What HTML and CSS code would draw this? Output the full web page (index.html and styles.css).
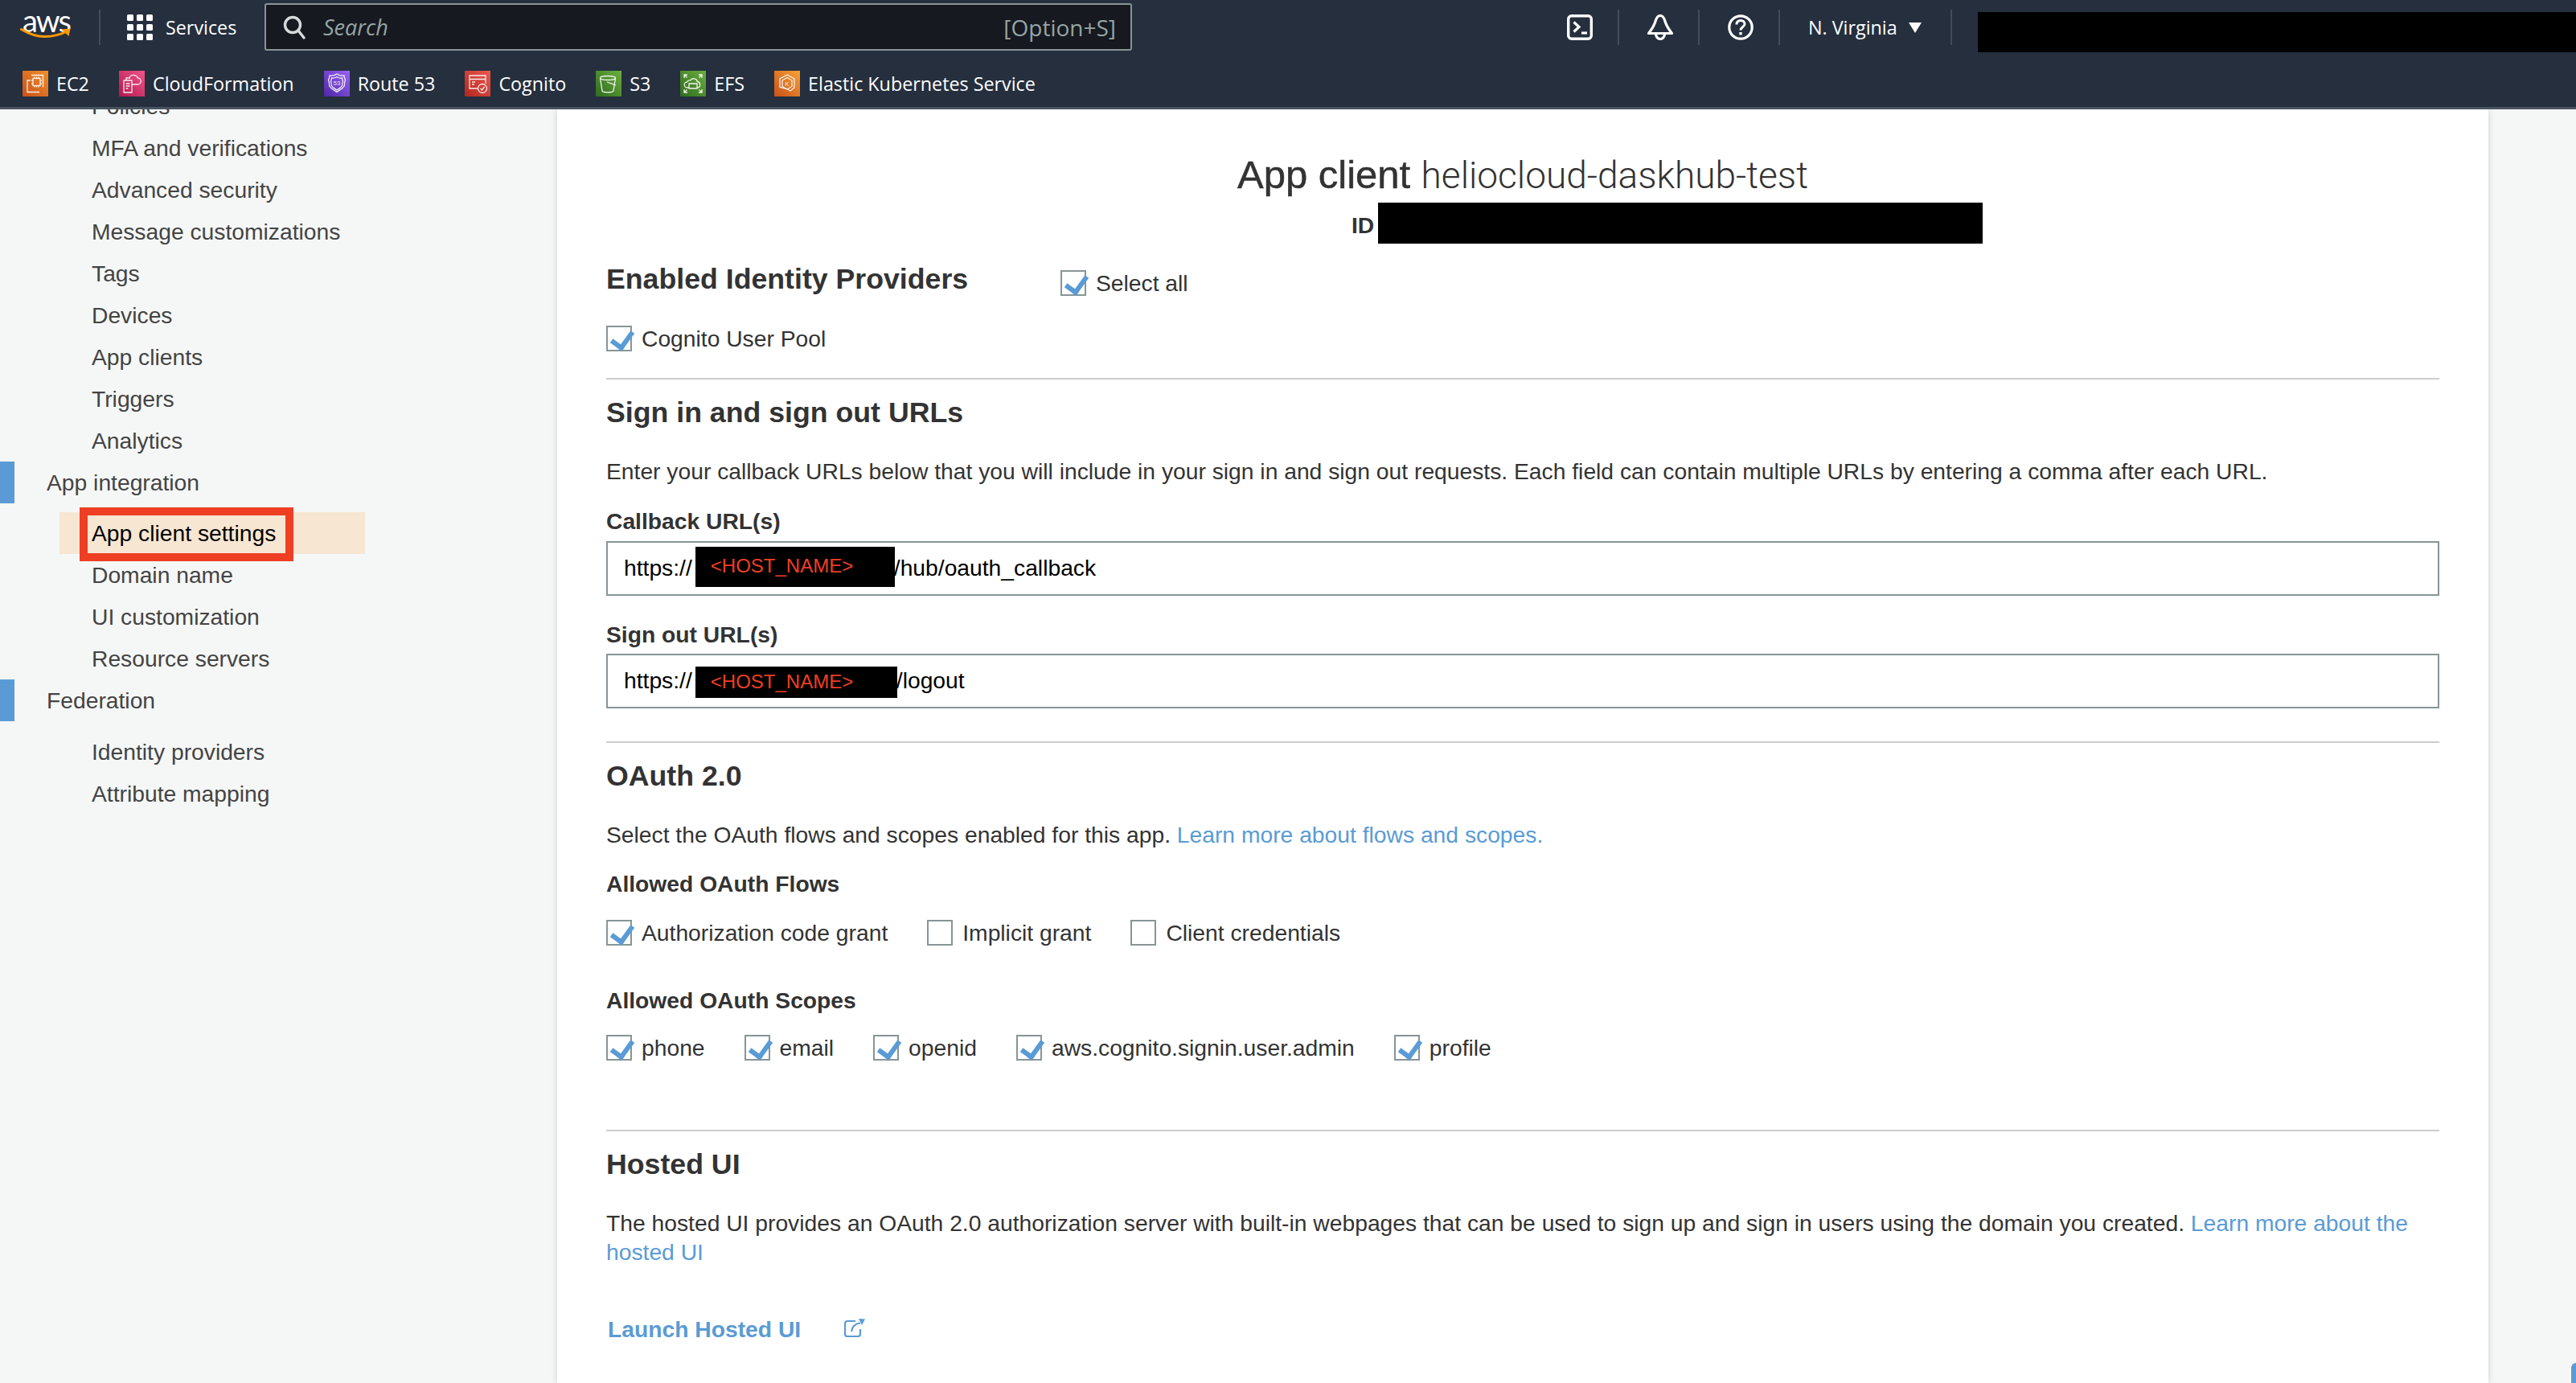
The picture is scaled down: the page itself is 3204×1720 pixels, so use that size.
FILE: index.html
```html
<!DOCTYPE html>
<html lang="en">
<head>
<meta charset="utf-8">
<title>App client settings</title>
<link rel="stylesheet" href="styles.css">
</head>
<body>
<header class="topbar">
  <div class="bar-main">
    <div class="logo">
      <span class="logo-text">aws</span>
      <svg class="swoosh" viewBox="0 0 64 14"><path d="M1 1.5C12 8 20 10.500 30 10.500C40 10.500 50 8 59 3.500" fill="none" stroke="#f90" stroke-width="3" stroke-linecap="round"/><path d="M51 1.500L62 .5L60 10Z" fill="#f90"/></svg>
    </div>
    <div class="bar-divider"></div>
    <div class="services">
      <svg class="grid-icon" viewBox="0 0 32 32" fill="#fff"><rect width="8" height="8" rx="1.500"/><rect x="12" width="8" height="8" rx="1.500"/><rect x="24" width="8" height="8" rx="1.500"/><rect y="12" width="8" height="8" rx="1.500"/><rect x="12" y="12" width="8" height="8" rx="1.500"/><rect x="24" y="12" width="8" height="8" rx="1.500"/><rect y="24" width="8" height="8" rx="1.500"/><rect x="12" y="24" width="8" height="8" rx="1.500"/><rect x="24" y="24" width="8" height="8" rx="1.500"/></svg>
      <span>Services</span>
    </div>
    <div class="search">
      <svg class="search-icon" viewBox="0 0 28 30" fill="none" stroke="#d5dbdb" stroke-width="3.400"><circle cx="12" cy="12" r="9.500"/><path d="M19 19L26 28" stroke-linecap="round"/></svg>
      <span class="search-text">Search</span>
      <span class="search-key">[Option+S]</span>
    </div>
    <div class="tool tool-first">
      <svg class="tool-icon" viewBox="0 0 32 32" fill="none" stroke="#fff" stroke-width="3.400"><rect x="1.700" y="1.700" width="28.600" height="28.600" rx="4"/><path d="M8.500 9.500L15 15.500L8.500 21.500" stroke-width="3.200"/><path d="M18 23H25" stroke-width="3.200"/></svg>
    </div>
    <div class="tool">
      <svg class="tool-icon" viewBox="0 0 32 32" fill="none" stroke="#fff" stroke-width="3.200" stroke-linejoin="round"><path d="M16 1.500C19.500 1.500 21 5 22 8.500C23.500 14 27 19 30.500 23.500H1.500C5 19 8.500 14 10 8.500C11 5 12.500 1.500 16 1.500Z"/><path d="M10.500 24A5.500 6.500 0 0 0 21.500 24"/></svg>
    </div>
    <div class="tool">
      <svg class="tool-icon" viewBox="0 0 32 32" fill="none" stroke="#fff" stroke-width="3.200"><circle cx="16" cy="16" r="14.200"/><path d="M11 12.500C11 9 13 7.500 16 7.500C19 7.500 21 9.200 21 11.800C21 15.500 16 15.500 16 19.500" stroke-width="3"/><rect x="14.300" y="22" width="3.400" height="3.400" fill="#fff" stroke="none"/></svg>
    </div>
    <div class="region"><span>N. Virginia</span><span class="caret"></span></div>
    <div class="account-redact"></div>
  </div>
  <nav class="shortcuts">
    <a class="shortcut"><span class="svc svc-orange"><svg viewBox="0 0 32 32" fill="none" stroke="#fff" stroke-width="1.300" opacity=".9"><rect x="13" y="9.500" width="9" height="9"/><path d="M15 7.500v2M17.500 7.500v2M20 7.500v2M15 18.500v2M17.500 18.500v2M20 18.500v2M11 12h2M11 16h2M22 12h2M22 16h2"/><path d="M11 5.500h14.500v15M21 26.500H6V12h4"/></svg></span>EC2</a>
    <a class="shortcut"><span class="svc svc-pink"><svg viewBox="0 0 32 32" fill="none" stroke="#fff" stroke-width="1.300" opacity=".9"><path d="M6 12h10v15H6zM8.500 16h5M8.500 19h5M8.500 22h3"/><path d="M9 12V9h5M16 17h7a4 4 0 0 0 .5-8a6 6 0 0 0-10.500-1"/></svg></span>CloudFormation</a>
    <a class="shortcut"><span class="svc svc-purple"><svg viewBox="0 0 32 32" fill="none" stroke="#fff" stroke-width="1.300" opacity=".9"><path d="M16 4c3 2 6 2.500 9 2c0 3 1 4 1.500 5.500c-1 3-1.500 4-1 7c-2 4-6 5-9.500 8c-3.500-3-7.500-4-9.500-8c.5-3 0-4-1-7C6 10 7 9 7 6c3 .5 6 0 9-2z"/><path d="M16 7.500c2 1.500 4 2 6.500 1.500c0 2 .5 3 1 4c-.5 2-1 3-.5 5c-1.500 3-4.500 4-7 6c-2.500-2-5.500-3-7-6c.5-2 0-3-.5-5c.5-1 1-2 1-4c2.500.5 4.500 0 6.500-1.500z"/><text class="svc-label" x="16" y="18" text-anchor="middle">53</text></svg></span>Route 53</a>
    <a class="shortcut"><span class="svc svc-red"><svg viewBox="0 0 32 32" fill="none" stroke="#fff" stroke-width="1.300" opacity=".9"><path d="M17 22H6V6h20v10M6 10.500h20M9 14h4M9 17h3"/><circle cx="22" cy="22" r="5.500"/><path d="M19.500 22l2 2l3-4"/></svg></span>Cognito</a>
    <a class="shortcut"><span class="svc svc-green"><svg viewBox="0 0 32 32" fill="none" stroke="#fff" stroke-width="1.300" opacity=".9"><ellipse cx="15" cy="9" rx="9.500" ry="2.500"/><path d="M5.500 9L8 25c1 2.500 13 2.500 14 0L24.500 9M14 14l11 4"/></svg></span>S3</a>
    <a class="shortcut"><span class="svc svc-green"><svg viewBox="0 0 32 32" fill="none" stroke="#fff" stroke-width="1.300" opacity=".9"><path d="M11 21H9a3.500 3.500 0 0 1-.5-7a3.500 3.500 0 0 1 4-2a5 5 0 0 1 9 1.500a4 4 0 0 1 1 7.500H21"/><path d="M11 16h10v6H11z"/><path d="M5 5l3.500 3.500M5 9V5h4M27 5l-3.500 3.500M27 9V5h-4M5 27l3.500-3.500M5 23v4h4M27 27l-3.500-3.500M27 23v4h-4"/></svg></span>EFS</a>
    <a class="shortcut"><span class="svc svc-amber"><svg viewBox="0 0 32 32" fill="none" stroke="#fff" stroke-width="1.300" opacity=".9"><path d="M16 5l9 5v11l-5 4-4-2.500-9-2V10z"/><path d="M16 8.500l6 3.500v7.500l-6 3.500-6-3.500V12z"/><text class="svc-label" x="16" y="19" text-anchor="middle">K</text></svg></span>Elastic Kubernetes Service</a>
  </nav>
</header>

<div class="page">
  <aside class="sidebar">
    <ul class="nav">
      <li class="nav-sub">Policies</li>
      <li class="nav-sub">MFA and verifications</li>
      <li class="nav-sub">Advanced security</li>
      <li class="nav-sub">Message customizations</li>
      <li class="nav-sub">Tags</li>
      <li class="nav-sub">Devices</li>
      <li class="nav-sub">App clients</li>
      <li class="nav-sub">Triggers</li>
      <li class="nav-sub">Analytics</li>
      <li class="nav-group">App integration</li>
      <li class="nav-sub nav-active nav-after-group">App client settings<span class="callout"></span></li>
      <li class="nav-sub">Domain name</li>
      <li class="nav-sub">UI customization</li>
      <li class="nav-sub">Resource servers</li>
      <li class="nav-group">Federation</li>
      <li class="nav-sub nav-after-fed">Identity providers</li>
      <li class="nav-sub">Attribute mapping</li>
    </ul>
  </aside>

  <main class="content">
    <h1 class="title"><span class="title-strong">App client</span> <span class="title-light">heliocloud-daskhub-test</span></h1>
    <div class="id-row"><b>ID</b><span class="id-redact"></span></div>

    <div class="providers">
      <h2 class="heading">Enabled Identity Providers</h2>
      <label class="check select-all"><span class="box on"></span>Select all</label>
    </div>
    <div class="checks cognito"><label class="check"><span class="box on"></span>Cognito User Pool</label></div>
    <hr class="rule rule-a">

    <h2 class="heading section-head">Sign in and sign out URLs</h2>
    <p class="text para-a">Enter your callback URLs below that you will include in your sign in and sign out requests. Each field can contain multiple URLs by entering a comma after each URL.</p>
    <div class="label callback-label">Callback URL(s)</div>
    <div class="url url-callback"><span>https://</span><span class="host host-tall">&lt;HOST_NAME&gt;</span><span>/hub/oauth_callback</span></div>
    <div class="label signout-label">Sign out URL(s)</div>
    <div class="url url-signout"><span>https://</span><span class="host host-short">&lt;HOST_NAME&gt;</span><span>/logout</span></div>
    <hr class="rule rule-b">

    <h2 class="heading section-head">OAuth 2.0</h2>
    <p class="text para-a">Select the OAuth flows and scopes enabled for this app. <a class="link">Learn more about flows and scopes.</a></p>
    <div class="label flows-label">Allowed OAuth Flows</div>
    <div class="checks flows">
      <label class="check"><span class="box on"></span>Authorization code grant</label>
      <label class="check"><span class="box"></span>Implicit grant</label>
      <label class="check"><span class="box"></span>Client credentials</label>
    </div>
    <div class="label scopes-label">Allowed OAuth Scopes</div>
    <div class="checks scopes">
      <label class="check"><span class="box on"></span>phone</label>
      <label class="check"><span class="box on"></span>email</label>
      <label class="check"><span class="box on"></span>openid</label>
      <label class="check"><span class="box on"></span>aws.cognito.signin.user.admin</label>
      <label class="check"><span class="box on"></span>profile</label>
    </div>
    <hr class="rule rule-c">

    <h2 class="heading section-head">Hosted UI</h2>
    <p class="text para-a">The hosted UI provides an OAuth 2.0 authorization server with built-in webpages that can be used to sign up and sign in users using the domain you created. <a class="link">Learn more about the hosted UI</a></p>
    <div class="launch">
      <a class="launch-link">Launch Hosted UI</a>
      <svg class="launch-icon" viewBox="0 0 28 24" fill="none" stroke="#5a9bd5" stroke-width="2.200"><path d="M14 4H4a3 3 0 0 0-3 3v13a3 3 0 0 0 3 3h13a3 3 0 0 0 3-3v-6"/><path d="M9 17C10 11 14 7 20 6.500"/><path d="M18 1l8 .5-4 7.500" fill="#5a9bd5" stroke="none"/></svg>
    </div>
  </main>

  <div class="rail"></div>
</div>
<span class="chat-tab"></span>
</body>
</html>
```

FILE: styles.css
```css
* { box-sizing: border-box; }
html, body { margin: 0; height: 1720px; overflow: hidden; }
body { background: #f5f7f6; font-family: "Liberation Sans", Arial, sans-serif; font-size: 28.25px; color: #444; position: relative; }
ul { list-style: none; margin: 0; padding: 0; }
h1, h2, p { margin: 0; }

/* Top bar */
.topbar { position: relative; z-index: 2; height: 136px; background: #252f3e; border-bottom: 3px solid #4a5460; color: #fff; font-family: "Open Sans", "Noto Sans", sans-serif; font-size: 23.3px; }
.bar-main { display: flex; align-items: center; height: 68px; padding-left: 25px; }
.logo { position: relative; width: 65px; height: 44px; flex: none; margin-top: -4px; }
.logo-text { position: absolute; left: 3px; top: -7px; font-family: Lato, sans-serif; font-size: 38px; line-height: 44px; letter-spacing: -2px; }
.swoosh { position: absolute; left: 0; top: 25px; width: 65px; height: 14px; }
.bar-divider { width: 2px; height: 44px; background: #414d5c; margin-left: 33px; flex: none; }
.services { display: flex; align-items: center; gap: 16px; width: 171px; margin-left: 33px; flex: none; }
.grid-icon { width: 32px; height: 32px; flex: none; }
.search { display: flex; align-items: center; width: 1079px; height: 59px; margin-top: -1px; flex: none; background: #16191f; border: 2px solid #879596; border-radius: 3px; padding: 0 18px 0 21px; }
.search-icon { width: 28px; height: 30px; flex: none; }
.search-text { margin-left: 22px; font-style: italic; color: #95a5a6; font-size: 27px; }
.search-key { margin-left: auto; color: #95a5a6; font-size: 28px; }
.tool { display: flex; align-items: center; justify-content: center; width: 100px; height: 44px; flex: none; border-right: 2px solid #414d5c; padding-left: 4px; }
.tool-first { margin-left: 506px; }
.tool-icon { width: 32px; height: 32px; }
.region { display: flex; align-items: center; width: 214px; height: 44px; flex: none; padding-left: 35px; border-right: 2px solid #414d5c; }
.caret { width: 0; height: 0; margin-left: 14px; border-left: 8px solid transparent; border-right: 8px solid transparent; border-top: 13px solid #fff; }
.account-redact { flex: 1; height: 50px; margin: 12px 0 0 32px; background: #000; }
.shortcuts { display: flex; align-items: center; gap: 37px; padding: 20px 0 0 28px; }
.shortcut { display: flex; align-items: center; gap: 10px; height: 32px; }
.svc { display: block; width: 32px; height: 32px; flex: none; }
.svc svg { display: block; width: 32px; height: 32px; }
.svc-label { font-family: "Liberation Sans", sans-serif; font-size: 8px; fill: #fff; stroke: none; }
.svc-orange { background: linear-gradient(45deg, #c8511b, #f0902b); }
.svc-amber { background: linear-gradient(45deg, #c8511b, #f7a134); }
.svc-pink { background: linear-gradient(45deg, #b0184f, #f0558a); }
.svc-purple { background: linear-gradient(45deg, #4d27a8, #9a63f5); }
.svc-red { background: linear-gradient(45deg, #b3261e, #ea5a50); }
.svc-green { background: linear-gradient(45deg, #2f6b1f, #6cae3e); }

/* Page */
.page { display: flex; height: 1584px; }
.sidebar { width: 693px; flex: none; height: 100%; overflow: hidden; background: #f5f7f6; }
.nav { margin-top: -30px; }
.nav-sub, .nav-group { height: 52px; line-height: 52px; white-space: nowrap; }
.nav-sub { position: relative; margin-left: 74px; width: 380px; padding-left: 40px; }
.nav-group { border-left: 18px solid #5a9bd5; padding-left: 40px; }
.nav-after-group { margin-top: 11px; }
.nav-after-fed { margin-top: 12px; }
.nav-active { background: #f6e6d2; color: #000; }
.callout { position: absolute; left: 25px; top: -6px; width: 266px; height: 67px; border: 10px solid #ee3f24; }

.content { width: 2402px; flex: none; height: 100%; overflow: hidden; background: #fff; padding: 51px 61px 0; box-shadow: 0 0 8px rgba(0, 0, 0, .16); position: relative; }
.rail { flex: 1; }
.chat-tab { position: absolute; right: 0; bottom: 0; width: 6px; height: 25px; background: #5a9bd5; border-top-left-radius: 6px; }

.title { font-size: 48px; line-height: 60px; font-weight: 400; text-align: center; color: #333; }
.title-strong { -webkit-text-stroke: .5px #333; font-size: 49px; }
.title-light { font-family: Roboto, sans-serif; font-weight: 300; font-size: 46px; }
.id-row { display: flex; align-items: center; height: 51px; margin-top: 4px; padding-left: 927px; }
.id-row b { color: #333; width: 33px; flex: none; margin-top: 5px; }
.id-redact { width: 752px; height: 51px; background: #000; flex: none; }

.heading { font-size: 35.7px; line-height: 44px; font-weight: 700; color: #333; }
.section-head { margin-top: 19px; }
.providers { display: flex; align-items: flex-start; margin-top: 22px; }
.select-all { position: absolute; left: 626px; margin-top: 9px; }
.cognito { margin-top: 34px; }
.rule { border: 0; height: 2px; background: #ccc; margin: 0; }
.rule-a { margin-top: 31px; }
.rule-b { margin-top: 41px; }
.rule-c { margin-top: 84px; }
.text { line-height: 36px; color: #333; }
.para-a { margin-top: 33px; }
.link { color: #5a9bd5; }
.label { font-weight: 700; line-height: 36px; color: #333; }
.callback-label { margin-top: 26px; }
.signout-label { margin-top: 30px; }
.flows-label { margin-top: 25px; }
.scopes-label { margin-top: 48px; }

.url { display: flex; align-items: center; height: 68px; border: 2px solid #879596; padding: 0 0 2px 20px; color: #000; }
.url-callback { margin-top: 7px; }
.url-signout { margin-top: 6px; }
.host { flex: none; margin-left: 4px; margin-right: -1px; background: #000; color: #ee3f24; font-size: 24px; padding-left: 19px; align-self: flex-start; }
.host-tall { width: 248px; height: 50px; line-height: 48px; margin-top: 5px; }
.host-short { width: 251px; height: 39px; line-height: 37px; margin-top: 14px; }

.checks { display: flex; gap: 49px; }
.flows { margin-top: 25px; }
.scopes { margin-top: 23px; }
.check { display: flex; align-items: center; gap: 12px; line-height: 36px; color: #333; white-space: nowrap; }
.box { position: relative; display: block; width: 32px; height: 32px; flex: none; border: 2px solid #879596; background: #fff; }
.box.on::after { content: ""; position: absolute; left: 9px; top: 0; width: 12px; height: 21px; border: solid #5a9bd5; border-width: 0 6px 6px 0; transform: rotate(36deg); }

.launch { display: flex; align-items: center; margin-top: 60px; padding-left: 2px; height: 36px; }
.launch-link { color: #5a9bd5; font-weight: 700; }
.launch-icon { width: 28px; height: 24px; margin: -4px 0 0 54px; flex: none; }
```
